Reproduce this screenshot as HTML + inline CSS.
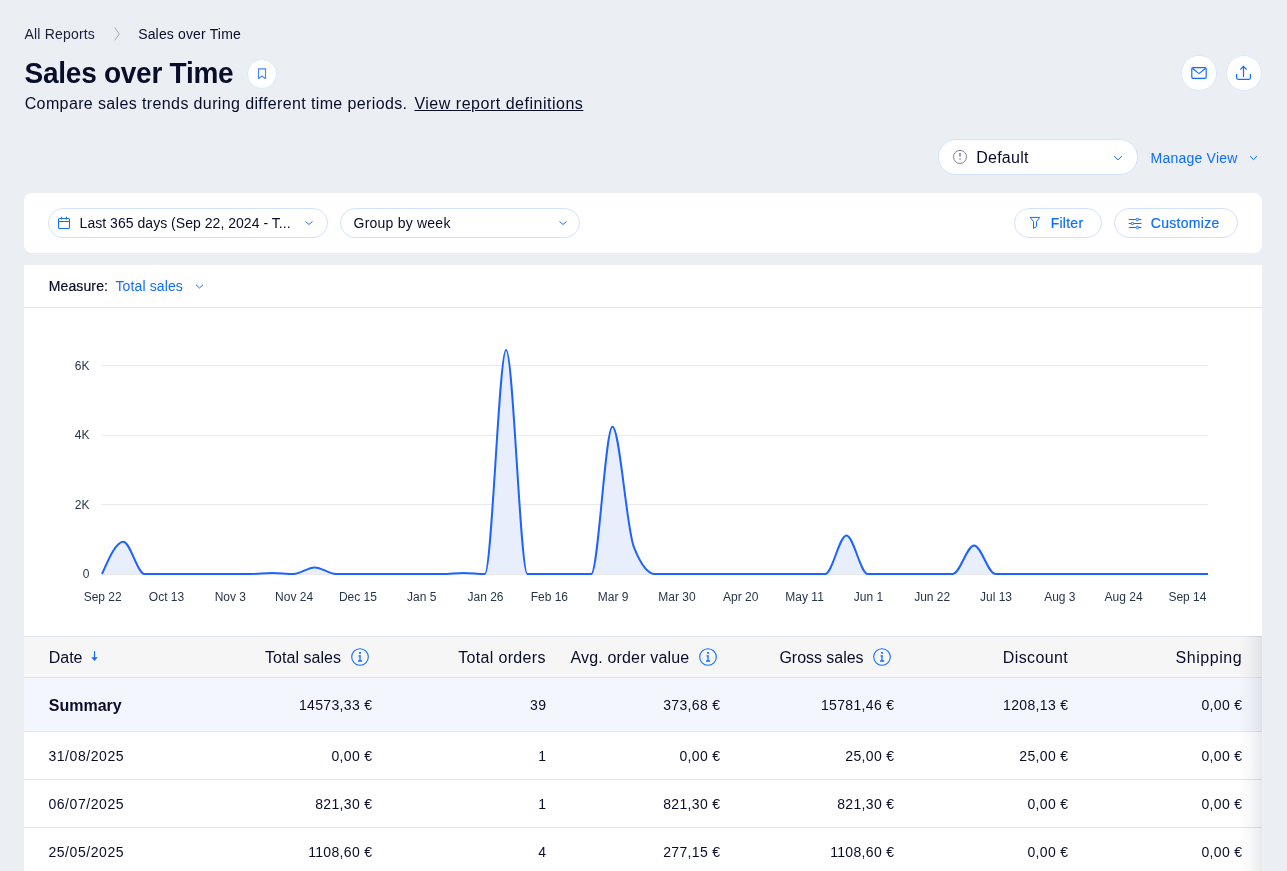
<!DOCTYPE html>
<html><head><meta charset="utf-8"><style>
html,body{margin:0;padding:0;}
body{width:1287px;height:871px;overflow:hidden;background:#EBEEF3;position:relative;font-family:"Liberation Sans",sans-serif;}
.t{position:absolute;white-space:nowrap;}
.circ{position:absolute;box-sizing:border-box;border-radius:50%;background:#fff;border:1px solid #DCE8FE;}
.pill{position:absolute;background:#fff;border:1px solid #D2E2FC;}
.card{position:absolute;background:#fff;}
</style></head><body>
<div id="root" style="position:absolute;left:0;top:0;width:1287px;height:871px;will-change:transform">
<div class="t" style="left:24.50px;top:26.88px;font-size:14px;line-height:15.64px;color:#1A1F3A;font-weight:400;letter-spacing:0.185px;">All Reports</div>
<svg style="position:absolute;left:112px;top:27px" width="10" height="14" viewBox="0 0 10 14"><path d="M2.7 0.6L7.3 7L2.7 13.3" fill="none" stroke="#A3A7BD" stroke-width="1"/></svg>
<div class="t" style="left:138.20px;top:26.88px;font-size:14px;line-height:15.64px;color:#080D2A;font-weight:400;letter-spacing:0.155px;">Sales over Time</div>
<div class="t" style="left:24.60px;top:57.91px;font-size:28px;line-height:31.28px;color:#080D2A;font-weight:700;letter-spacing:-0.262px;transform:scaleY(1.05);transform-origin:0 25.3px;">Sales over Time</div>
<div class="circ" style="left:247px;top:59px;width:30px;height:30px"></div>
<svg style="position:absolute;left:256px;top:67px" width="12" height="12" viewBox="0 0 12 12"><path d="M2.5 11.7V1.9H9.5V11.7L6 9.1Z" fill="none" stroke="#4D86FF" stroke-width="1.2" stroke-linejoin="miter"/></svg>
<div class="t" style="left:24.70px;top:94.97px;font-size:16px;line-height:17.87px;color:#080D2A;font-weight:400;letter-spacing:0.378px;">Compare sales trends during different time periods.</div>
<div class="t" style="left:414.40px;top:94.97px;font-size:16px;line-height:17.87px;color:#080D2A;font-weight:400;letter-spacing:0.516px;text-decoration:underline;text-underline-offset:1px;text-decoration-thickness:1px;">View report definitions</div>
<div class="circ" style="left:1181px;top:55px;width:36px;height:36px"></div>
<div class="circ" style="left:1226px;top:55px;width:36px;height:36px"></div>
<svg style="position:absolute;left:1191px;top:65px" width="16" height="16" viewBox="0 0 16 16"><rect x="0.8" y="2.6" width="14.4" height="10.8" rx="1.3" fill="none" stroke="#116DFF" stroke-width="1.2"/><path d="M1.3 3.2L8 8.6L14.7 3.2" fill="none" stroke="#116DFF" stroke-width="1.2"/></svg>
<svg style="position:absolute;left:1236px;top:65px" width="16" height="16" viewBox="0 0 16 16"><path d="M7.5 11.9V1.3M4.3 4.6L7.5 1.3L10.7 4.6" fill="none" stroke="#116DFF" stroke-width="1.2"/><path d="M0.6 9V12.8Q0.6 14.3 2.1 14.3H12.9Q14.4 14.3 14.4 12.8V9" fill="none" stroke="#116DFF" stroke-width="1.2"/></svg>
<div class="pill" style="left:938px;top:139px;width:198px;height:34px;border-radius:18px"></div>
<svg style="position:absolute;left:952px;top:149px" width="16" height="16" viewBox="0 0 16 16"><circle cx="8" cy="7.9" r="6.5" fill="none" stroke="#7A7F9E" stroke-width="1"/><path d="M8 4.1V7.6" stroke="#6E7396" stroke-width="1.4"/><rect x="7.3" y="9.2" width="1.4" height="1.6" fill="#9A9EB8"/></svg>
<div class="t" style="left:976.20px;top:148.97px;font-size:16px;line-height:17.87px;color:#080D2A;font-weight:400;letter-spacing:0.258px;">Default</div>
<svg style="position:absolute;left:1113px;top:154px" width="10" height="8" viewBox="0 0 10 8"><path d="M1.2 2.2L5 5.8L8.8 2.2" fill="none" stroke="#116DFF" stroke-width="1"/></svg>
<div class="t" style="left:1150.60px;top:150.83px;font-size:14px;line-height:15.64px;color:#116DFF;font-weight:400;letter-spacing:0.221px;">Manage View</div>
<svg style="position:absolute;left:1249px;top:154px" width="9" height="8" viewBox="0 0 9 8"><path d="M1 2.2L4.5 5.6L8 2.2" fill="none" stroke="#116DFF" stroke-width="1"/></svg>
<div class="card" style="left:24px;top:193px;width:1238px;height:60px;border-radius:8px"></div>
<div class="pill" style="left:48px;top:208px;width:278px;height:28px;border-radius:15px"></div>
<svg style="position:absolute;left:57px;top:216px" width="14" height="14" viewBox="0 0 14 14"><rect x="1.5" y="2.5" width="11" height="10" rx="1.2" fill="none" stroke="#116DFF" stroke-width="1.1"/><path d="M1.5 5.5H12.5M4.5 0.8V3.6M9.5 0.8V3.6" fill="none" stroke="#116DFF" stroke-width="1.1"/></svg>
<div class="t" style="left:79.60px;top:216.13px;font-size:14px;line-height:15.64px;color:#080D2A;font-weight:400;letter-spacing:0.033px;">Last 365 days (Sep 22, 2024 - T...</div>
<svg style="position:absolute;left:304px;top:220px" width="10" height="8" viewBox="0 0 10 8"><path d="M1.5 1.4L5 4.5L8.5 1.4" fill="none" stroke="#116DFF" stroke-width="1"/></svg>
<div class="pill" style="left:340px;top:208px;width:238px;height:28px;border-radius:15px"></div>
<div class="t" style="left:353.60px;top:216.13px;font-size:14px;line-height:15.64px;color:#080D2A;font-weight:400;letter-spacing:0.219px;">Group by week</div>
<svg style="position:absolute;left:558px;top:220px" width="10" height="8" viewBox="0 0 10 8"><path d="M1.5 1.4L5 4.5L8.5 1.4" fill="none" stroke="#116DFF" stroke-width="1"/></svg>
<div class="pill" style="left:1014px;top:208px;width:86px;height:28px;border-radius:15px"></div>
<svg style="position:absolute;left:1028px;top:216px" width="14" height="14" viewBox="0 0 14 14"><path d="M2.1 1.4H11.8L8.5 5.6V10.6L5.5 12.4V5.6Z" fill="none" stroke="#116DFF" stroke-width="1" stroke-linejoin="round"/></svg>
<div class="t" style="left:1050.70px;top:216.13px;font-size:14px;line-height:15.64px;color:#116DFF;font-weight:400;letter-spacing:0.248px;-webkit-text-stroke:0.2px #116DFF;">Filter</div>
<div class="pill" style="left:1114px;top:208px;width:122px;height:28px;border-radius:15px"></div>
<svg style="position:absolute;left:1128px;top:216px" width="14" height="14" viewBox="0 0 14 14"><path d="M1.1 3.5H13M1.1 7.5H13M1.1 11.5H13" stroke="#116DFF" stroke-width="1.1" stroke-linecap="round"/><circle cx="9.4" cy="3.5" r="1.2" fill="#fff" stroke="#116DFF" stroke-width="1"/><circle cx="4.5" cy="7.5" r="1.2" fill="#fff" stroke="#116DFF" stroke-width="1"/><circle cx="9.4" cy="11.5" r="1.2" fill="#fff" stroke="#116DFF" stroke-width="1"/></svg>
<div class="t" style="left:1150.80px;top:216.13px;font-size:14px;line-height:15.64px;color:#116DFF;font-weight:400;letter-spacing:0.286px;-webkit-text-stroke:0.2px #116DFF;">Customize</div>
<div class="card" style="left:24px;top:265px;width:1238px;height:620px"></div>
<div style="position:absolute;left:24px;top:307px;width:1238px;height:1px;background:#DFE5EB"></div>
<div class="t" style="left:48.70px;top:279.13px;font-size:14px;line-height:15.64px;color:#080D2A;font-weight:400;letter-spacing:0.130px;-webkit-text-stroke:0.2px #080D2A;">Measure:</div>
<div class="t" style="left:115.50px;top:279.13px;font-size:14px;line-height:15.64px;color:#116DFF;font-weight:400;letter-spacing:0.123px;">Total sales</div>
<svg style="position:absolute;left:195px;top:283px" width="9" height="8" viewBox="0 0 9 8"><path d="M1 1.8L4.5 5L8 1.8" fill="none" stroke="#116DFF" stroke-width="1"/></svg>
<svg style="position:absolute;left:0;top:0" width="1287" height="871"><line x1="101.5" x2="1208" y1="365.5" y2="365.5" stroke="#E9E9EC" stroke-width="1"/><line x1="101.5" x2="1208" y1="435.5" y2="435.5" stroke="#E9E9EC" stroke-width="1"/><line x1="101.5" x2="1208" y1="504.5" y2="504.5" stroke="#E9E9EC" stroke-width="1"/><line x1="101.5" x2="1208" y1="574.5" y2="574.5" stroke="#E9E9EC" stroke-width="1"/><path d="M102.00,574.00C109.09,557.84 116.18,541.68 123.27,541.68C130.36,541.68 137.45,574.00 144.54,574.00C151.63,574.00 158.72,574.00 165.81,574.00C172.90,574.00 179.99,574.00 187.08,574.00C194.17,574.00 201.26,574.00 208.35,574.00C215.44,574.00 222.53,574.00 229.62,574.00C236.71,574.00 243.79,574.00 250.88,574.00C257.97,574.00 265.06,572.96 272.15,572.96C279.24,572.96 286.33,574.00 293.42,574.00C300.51,574.00 307.60,567.40 314.69,567.40C321.78,567.40 328.87,574.00 335.96,574.00C343.05,574.00 350.14,574.00 357.23,574.00C364.32,574.00 371.41,574.00 378.50,574.00C385.59,574.00 392.68,574.00 399.77,574.00C406.86,574.00 413.95,574.00 421.04,574.00C428.13,574.00 435.22,574.00 442.31,574.00C449.40,574.00 456.49,572.96 463.58,572.96C470.67,572.96 477.76,574.00 484.85,574.00C491.94,574.00 499.03,350.04 506.12,350.04C513.21,350.04 520.29,574.00 527.38,574.00C534.47,574.00 541.56,574.00 548.65,574.00C555.74,574.00 562.83,574.00 569.92,574.00C577.01,574.00 584.10,574.00 591.19,574.00C598.28,574.00 605.37,426.83 612.46,426.83C619.55,426.83 626.64,528.25 633.73,546.55C640.82,564.85 647.91,574.00 655.00,574.00C662.09,574.00 669.18,574.00 676.27,574.00C683.36,574.00 690.45,574.00 697.54,574.00C704.63,574.00 711.72,574.00 718.81,574.00C725.90,574.00 732.99,574.00 740.08,574.00C747.17,574.00 754.26,574.00 761.35,574.00C768.44,574.00 775.53,574.00 782.62,574.00C789.71,574.00 796.79,574.00 803.88,574.00C810.97,574.00 818.06,574.00 825.15,574.00C832.24,574.00 839.33,535.48 846.42,535.48C853.51,535.48 860.60,574.00 867.69,574.00C874.78,574.00 881.87,574.00 888.96,574.00C896.05,574.00 903.14,574.00 910.23,574.00C917.32,574.00 924.41,574.00 931.50,574.00C938.59,574.00 945.68,574.00 952.77,574.00C959.86,574.00 966.95,545.46 974.04,545.46C981.13,545.46 988.22,574.00 995.31,574.00C1002.40,574.00 1009.49,574.00 1016.58,574.00C1023.67,574.00 1030.76,574.00 1037.85,574.00C1044.94,574.00 1052.03,574.00 1059.12,574.00C1066.21,574.00 1073.29,574.00 1080.38,574.00C1087.47,574.00 1094.56,574.00 1101.65,574.00C1108.74,574.00 1115.83,574.00 1122.92,574.00C1130.01,574.00 1137.10,574.00 1144.19,574.00C1151.28,574.00 1158.37,574.00 1165.46,574.00C1172.55,574.00 1179.64,574.00 1186.73,574.00C1193.82,574.00 1200.91,574.00 1208.00,574.00L1208.00,574.0L102.00,574.0Z" fill="#E9EEFC"/><path d="M102.00,574.00C109.09,557.84 116.18,541.68 123.27,541.68C130.36,541.68 137.45,574.00 144.54,574.00C151.63,574.00 158.72,574.00 165.81,574.00C172.90,574.00 179.99,574.00 187.08,574.00C194.17,574.00 201.26,574.00 208.35,574.00C215.44,574.00 222.53,574.00 229.62,574.00C236.71,574.00 243.79,574.00 250.88,574.00C257.97,574.00 265.06,572.96 272.15,572.96C279.24,572.96 286.33,574.00 293.42,574.00C300.51,574.00 307.60,567.40 314.69,567.40C321.78,567.40 328.87,574.00 335.96,574.00C343.05,574.00 350.14,574.00 357.23,574.00C364.32,574.00 371.41,574.00 378.50,574.00C385.59,574.00 392.68,574.00 399.77,574.00C406.86,574.00 413.95,574.00 421.04,574.00C428.13,574.00 435.22,574.00 442.31,574.00C449.40,574.00 456.49,572.96 463.58,572.96C470.67,572.96 477.76,574.00 484.85,574.00C491.94,574.00 499.03,350.04 506.12,350.04C513.21,350.04 520.29,574.00 527.38,574.00C534.47,574.00 541.56,574.00 548.65,574.00C555.74,574.00 562.83,574.00 569.92,574.00C577.01,574.00 584.10,574.00 591.19,574.00C598.28,574.00 605.37,426.83 612.46,426.83C619.55,426.83 626.64,528.25 633.73,546.55C640.82,564.85 647.91,574.00 655.00,574.00C662.09,574.00 669.18,574.00 676.27,574.00C683.36,574.00 690.45,574.00 697.54,574.00C704.63,574.00 711.72,574.00 718.81,574.00C725.90,574.00 732.99,574.00 740.08,574.00C747.17,574.00 754.26,574.00 761.35,574.00C768.44,574.00 775.53,574.00 782.62,574.00C789.71,574.00 796.79,574.00 803.88,574.00C810.97,574.00 818.06,574.00 825.15,574.00C832.24,574.00 839.33,535.48 846.42,535.48C853.51,535.48 860.60,574.00 867.69,574.00C874.78,574.00 881.87,574.00 888.96,574.00C896.05,574.00 903.14,574.00 910.23,574.00C917.32,574.00 924.41,574.00 931.50,574.00C938.59,574.00 945.68,574.00 952.77,574.00C959.86,574.00 966.95,545.46 974.04,545.46C981.13,545.46 988.22,574.00 995.31,574.00C1002.40,574.00 1009.49,574.00 1016.58,574.00C1023.67,574.00 1030.76,574.00 1037.85,574.00C1044.94,574.00 1052.03,574.00 1059.12,574.00C1066.21,574.00 1073.29,574.00 1080.38,574.00C1087.47,574.00 1094.56,574.00 1101.65,574.00C1108.74,574.00 1115.83,574.00 1122.92,574.00C1130.01,574.00 1137.10,574.00 1144.19,574.00C1151.28,574.00 1158.37,574.00 1165.46,574.00C1172.55,574.00 1179.64,574.00 1186.73,574.00C1193.82,574.00 1200.91,574.00 1208.00,574.00" fill="none" stroke="#1E62FF" stroke-width="2"/></svg>
<div class="t" style="right:1197.50px;top:359.64px;font-size:12px;line-height:13.40px;color:#26364A;font-weight:400;letter-spacing:0.000px;">6K</div>
<div class="t" style="right:1197.50px;top:429.44px;font-size:12px;line-height:13.40px;color:#26364A;font-weight:400;letter-spacing:0.000px;">4K</div>
<div class="t" style="right:1197.50px;top:498.74px;font-size:12px;line-height:13.40px;color:#26364A;font-weight:400;letter-spacing:0.000px;">2K</div>
<div class="t" style="right:1197.50px;top:568.14px;font-size:12px;line-height:13.40px;color:#26364A;font-weight:400;letter-spacing:0.000px;">0</div>
<div class="t" style="left:83.68px;top:590.94px;font-size:12px;line-height:13.40px;color:#26364A;font-weight:400;letter-spacing:0.000px;">Sep 22</div>
<div class="t" style="left:148.83px;top:590.94px;font-size:12px;line-height:13.40px;color:#26364A;font-weight:400;letter-spacing:0.000px;">Oct 13</div>
<div class="t" style="left:214.64px;top:590.94px;font-size:12px;line-height:13.40px;color:#26364A;font-weight:400;letter-spacing:0.000px;">Nov 3</div>
<div class="t" style="left:275.11px;top:590.94px;font-size:12px;line-height:13.40px;color:#26364A;font-weight:400;letter-spacing:0.000px;">Nov 24</div>
<div class="t" style="left:338.92px;top:590.94px;font-size:12px;line-height:13.40px;color:#26364A;font-weight:400;letter-spacing:0.000px;">Dec 15</div>
<div class="t" style="left:407.06px;top:590.94px;font-size:12px;line-height:13.40px;color:#26364A;font-weight:400;letter-spacing:0.000px;">Jan 5</div>
<div class="t" style="left:467.53px;top:590.94px;font-size:12px;line-height:13.40px;color:#26364A;font-weight:400;letter-spacing:0.000px;">Jan 26</div>
<div class="t" style="left:530.67px;top:590.94px;font-size:12px;line-height:13.40px;color:#26364A;font-weight:400;letter-spacing:0.000px;">Feb 16</div>
<div class="t" style="left:597.82px;top:590.94px;font-size:12px;line-height:13.40px;color:#26364A;font-weight:400;letter-spacing:0.000px;">Mar 9</div>
<div class="t" style="left:658.29px;top:590.94px;font-size:12px;line-height:13.40px;color:#26364A;font-weight:400;letter-spacing:0.000px;">Mar 30</div>
<div class="t" style="left:723.10px;top:590.94px;font-size:12px;line-height:13.40px;color:#26364A;font-weight:400;letter-spacing:0.000px;">Apr 20</div>
<div class="t" style="left:785.35px;top:590.94px;font-size:12px;line-height:13.40px;color:#26364A;font-weight:400;letter-spacing:0.000px;">May 11</div>
<div class="t" style="left:853.71px;top:590.94px;font-size:12px;line-height:13.40px;color:#26364A;font-weight:400;letter-spacing:0.000px;">Jun 1</div>
<div class="t" style="left:914.18px;top:590.94px;font-size:12px;line-height:13.40px;color:#26364A;font-weight:400;letter-spacing:0.000px;">Jun 22</div>
<div class="t" style="left:980.00px;top:590.94px;font-size:12px;line-height:13.40px;color:#26364A;font-weight:400;letter-spacing:0.000px;">Jul 13</div>
<div class="t" style="left:1044.13px;top:590.94px;font-size:12px;line-height:13.40px;color:#26364A;font-weight:400;letter-spacing:0.000px;">Aug 3</div>
<div class="t" style="left:1104.61px;top:590.94px;font-size:12px;line-height:13.40px;color:#26364A;font-weight:400;letter-spacing:0.000px;">Aug 24</div>
<div class="t" style="left:1168.41px;top:590.94px;font-size:12px;line-height:13.40px;color:#26364A;font-weight:400;letter-spacing:0.000px;">Sep 14</div>
<div style="position:absolute;left:24px;top:636px;width:1238px;height:40px;background:#F6F6F7;border-top:1px solid #DFE5EB;border-bottom:1px solid #DFE5EB"></div>
<div style="position:absolute;left:24px;top:678px;width:1238px;height:53px;background:#F4F6FD;border-bottom:1px solid #DFE5EB"></div>
<div style="position:absolute;left:24px;top:779px;width:1238px;height:1px;background:#DFE5EB"></div>
<div style="position:absolute;left:24px;top:827px;width:1238px;height:1px;background:#DFE5EB"></div>
<div class="t" style="left:48.80px;top:649.47px;font-size:16px;line-height:17.87px;color:#080D2A;font-weight:400;letter-spacing:-0.049px;">Date</div>
<svg style="position:absolute;left:88px;top:650px" width="12" height="14" viewBox="0 0 12 14"><path d="M6.5 1.2V8.5" fill="none" stroke="#116DFF" stroke-width="1.2"/><path d="M3.2 7.2L6.5 11.1L9.8 7.2Z" fill="#116DFF"/></svg>
<div class="t" style="right:945.96px;top:649.47px;font-size:16px;line-height:17.87px;color:#080D2A;font-weight:400;letter-spacing:0.037px;">Total sales</div>
<svg style="position:absolute;left:350px;top:647px" width="20" height="20" viewBox="0 0 20 20"><circle cx="10" cy="10" r="8.3" fill="none" stroke="#116DFF" stroke-width="1.1"/><rect x="9.1" y="5" width="1.8" height="1.8" fill="#116DFF"/><path d="M10 8.3V14.3M8.5 8.9H10.9M8 14H12.1" fill="none" stroke="#116DFF" stroke-width="1.3"/></svg>
<div class="t" style="right:741.27px;top:649.47px;font-size:16px;line-height:17.87px;color:#080D2A;font-weight:400;letter-spacing:0.326px;">Total orders</div>
<div class="t" style="right:597.74px;top:649.47px;font-size:16px;line-height:17.87px;color:#080D2A;font-weight:400;letter-spacing:0.155px;">Avg. order value</div>
<svg style="position:absolute;left:698px;top:647px" width="20" height="20" viewBox="0 0 20 20"><circle cx="10" cy="10" r="8.3" fill="none" stroke="#116DFF" stroke-width="1.1"/><rect x="9.1" y="5" width="1.8" height="1.8" fill="#116DFF"/><path d="M10 8.3V14.3M8.5 8.9H10.9M8 14H12.1" fill="none" stroke="#116DFF" stroke-width="1.3"/></svg>
<div class="t" style="right:423.54px;top:649.47px;font-size:16px;line-height:17.87px;color:#080D2A;font-weight:400;letter-spacing:-0.043px;">Gross sales</div>
<svg style="position:absolute;left:872px;top:647px" width="20" height="20" viewBox="0 0 20 20"><circle cx="10" cy="10" r="8.3" fill="none" stroke="#116DFF" stroke-width="1.1"/><rect x="9.1" y="5" width="1.8" height="1.8" fill="#116DFF"/><path d="M10 8.3V14.3M8.5 8.9H10.9M8 14H12.1" fill="none" stroke="#116DFF" stroke-width="1.3"/></svg>
<div class="t" style="right:218.79px;top:649.47px;font-size:16px;line-height:17.87px;color:#080D2A;font-weight:400;letter-spacing:0.406px;">Discount</div>
<div class="t" style="right:44.86px;top:649.47px;font-size:16px;line-height:17.87px;color:#080D2A;font-weight:400;letter-spacing:0.541px;">Shipping</div>
<div class="t" style="left:48.80px;top:696.87px;font-size:16px;line-height:17.87px;color:#080D2A;font-weight:700;letter-spacing:0.000px;">Summary</div>
<div class="t" style="right:914.67px;top:698.43px;font-size:14px;line-height:15.64px;color:#080D2A;font-weight:400;letter-spacing:0.330px;">14573,33 €</div>
<div class="t" style="right:740.67px;top:698.43px;font-size:14px;line-height:15.64px;color:#080D2A;font-weight:400;letter-spacing:0.330px;">39</div>
<div class="t" style="right:566.67px;top:698.43px;font-size:14px;line-height:15.64px;color:#080D2A;font-weight:400;letter-spacing:0.330px;">373,68 €</div>
<div class="t" style="right:392.67px;top:698.43px;font-size:14px;line-height:15.64px;color:#080D2A;font-weight:400;letter-spacing:0.330px;">15781,46 €</div>
<div class="t" style="right:218.67px;top:698.43px;font-size:14px;line-height:15.64px;color:#080D2A;font-weight:400;letter-spacing:0.330px;">1208,13 €</div>
<div class="t" style="right:44.67px;top:698.43px;font-size:14px;line-height:15.64px;color:#080D2A;font-weight:400;letter-spacing:0.330px;">0,00 €</div>
<div class="t" style="left:48.40px;top:748.93px;font-size:14px;line-height:15.64px;color:#080D2A;font-weight:400;letter-spacing:0.573px;">31/08/2025</div>
<div class="t" style="right:914.67px;top:748.93px;font-size:14px;line-height:15.64px;color:#080D2A;font-weight:400;letter-spacing:0.330px;">0,00 €</div>
<div class="t" style="right:740.67px;top:748.93px;font-size:14px;line-height:15.64px;color:#080D2A;font-weight:400;letter-spacing:0.330px;">1</div>
<div class="t" style="right:566.67px;top:748.93px;font-size:14px;line-height:15.64px;color:#080D2A;font-weight:400;letter-spacing:0.330px;">0,00 €</div>
<div class="t" style="right:392.67px;top:748.93px;font-size:14px;line-height:15.64px;color:#080D2A;font-weight:400;letter-spacing:0.330px;">25,00 €</div>
<div class="t" style="right:218.67px;top:748.93px;font-size:14px;line-height:15.64px;color:#080D2A;font-weight:400;letter-spacing:0.330px;">25,00 €</div>
<div class="t" style="right:44.67px;top:748.93px;font-size:14px;line-height:15.64px;color:#080D2A;font-weight:400;letter-spacing:0.330px;">0,00 €</div>
<div class="t" style="left:48.40px;top:797.13px;font-size:14px;line-height:15.64px;color:#080D2A;font-weight:400;letter-spacing:0.573px;">06/07/2025</div>
<div class="t" style="right:914.67px;top:797.13px;font-size:14px;line-height:15.64px;color:#080D2A;font-weight:400;letter-spacing:0.330px;">821,30 €</div>
<div class="t" style="right:740.67px;top:797.13px;font-size:14px;line-height:15.64px;color:#080D2A;font-weight:400;letter-spacing:0.330px;">1</div>
<div class="t" style="right:566.67px;top:797.13px;font-size:14px;line-height:15.64px;color:#080D2A;font-weight:400;letter-spacing:0.330px;">821,30 €</div>
<div class="t" style="right:392.67px;top:797.13px;font-size:14px;line-height:15.64px;color:#080D2A;font-weight:400;letter-spacing:0.330px;">821,30 €</div>
<div class="t" style="right:218.67px;top:797.13px;font-size:14px;line-height:15.64px;color:#080D2A;font-weight:400;letter-spacing:0.330px;">0,00 €</div>
<div class="t" style="right:44.67px;top:797.13px;font-size:14px;line-height:15.64px;color:#080D2A;font-weight:400;letter-spacing:0.330px;">0,00 €</div>
<div class="t" style="left:48.40px;top:844.73px;font-size:14px;line-height:15.64px;color:#080D2A;font-weight:400;letter-spacing:0.573px;">25/05/2025</div>
<div class="t" style="right:914.67px;top:844.73px;font-size:14px;line-height:15.64px;color:#080D2A;font-weight:400;letter-spacing:0.330px;">1108,60 €</div>
<div class="t" style="right:740.67px;top:844.73px;font-size:14px;line-height:15.64px;color:#080D2A;font-weight:400;letter-spacing:0.330px;">4</div>
<div class="t" style="right:566.67px;top:844.73px;font-size:14px;line-height:15.64px;color:#080D2A;font-weight:400;letter-spacing:0.330px;">277,15 €</div>
<div class="t" style="right:392.67px;top:844.73px;font-size:14px;line-height:15.64px;color:#080D2A;font-weight:400;letter-spacing:0.330px;">1108,60 €</div>
<div class="t" style="right:218.67px;top:844.73px;font-size:14px;line-height:15.64px;color:#080D2A;font-weight:400;letter-spacing:0.330px;">0,00 €</div>
<div class="t" style="right:44.67px;top:844.73px;font-size:14px;line-height:15.64px;color:#080D2A;font-weight:400;letter-spacing:0.330px;">0,00 €</div>
<div style="position:absolute;left:1238px;top:636px;width:24px;height:240px;background:linear-gradient(90deg,rgba(22,45,61,0),rgba(22,45,61,0.03) 50%,rgba(22,45,61,0.10))"></div>
</div>
</body></html>
